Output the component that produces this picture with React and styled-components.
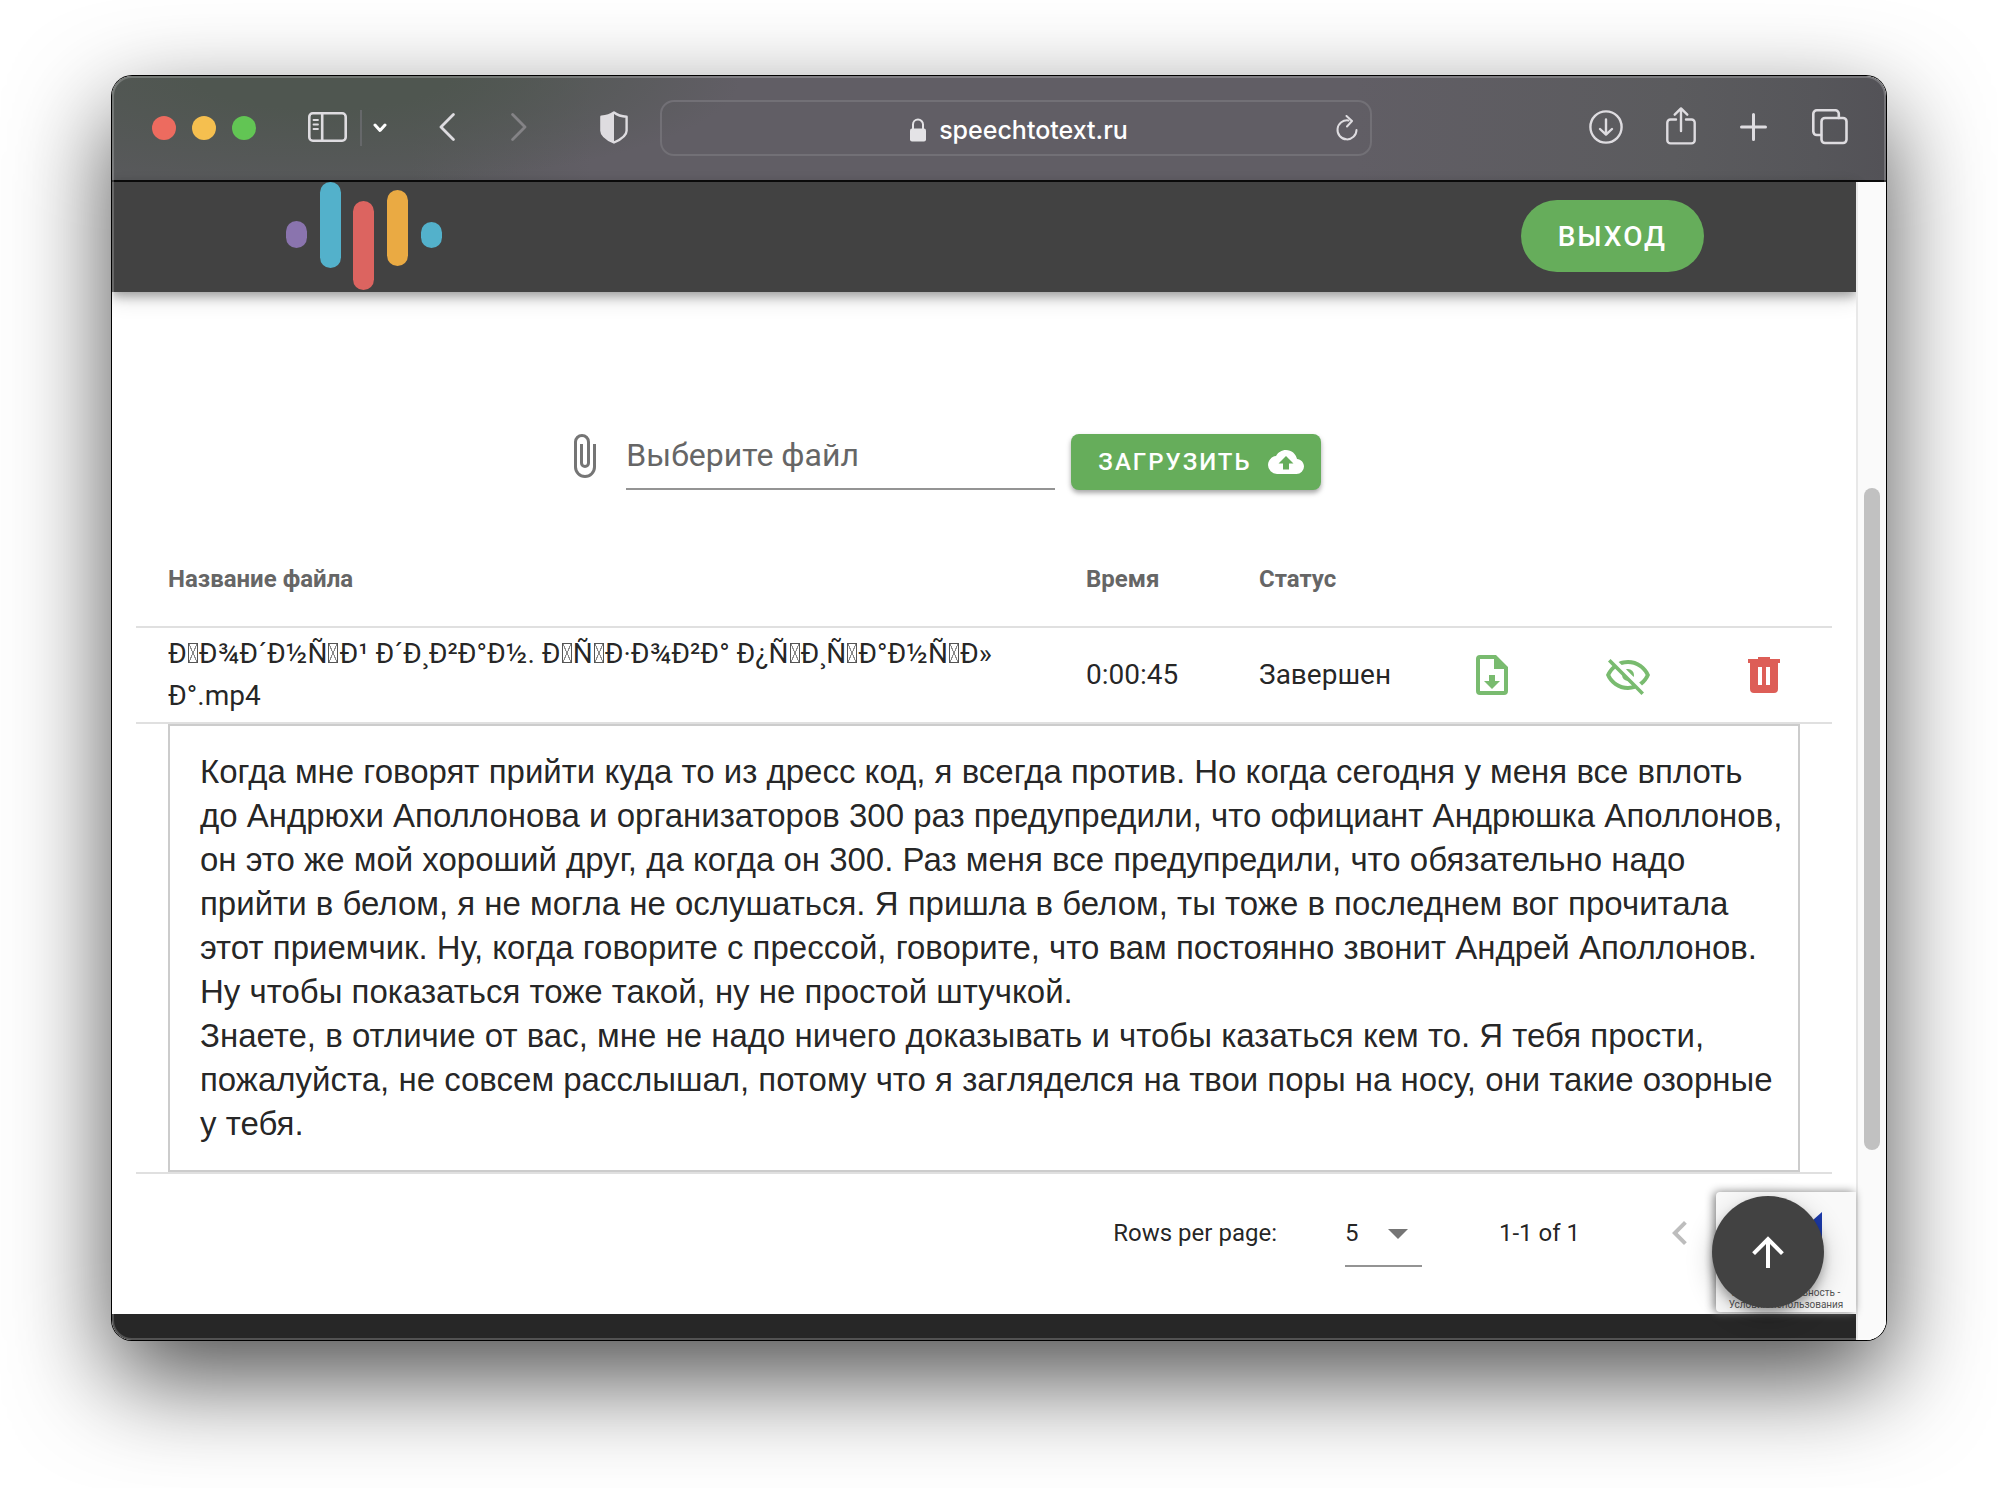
import React from "react";
import styled, { createGlobalStyle } from "styled-components";

const GlobalStyle = createGlobalStyle`
  * {
    box-sizing: border-box;
  }
  body {
    margin: 0;
    background: #fff;
    color: rgba(0, 0, 0, 0.87);
    font-family: Roboto, "Noto Sans", sans-serif;
  }
  button {
    border: 0;
    padding: 0;
    background: none;
    color: inherit;
    font-family: inherit;
    cursor: pointer;
  }
`;

const Desktop = styled.div`
  padding: 76px 112px 148px;
`;

const BrowserWindow = styled.div`
  position: relative;
  border-radius: 20px;
  overflow: hidden;
  background: #fff;
`;

const WindowShadow = styled.div`
  border-radius: 20px;
  box-shadow: 0 0 0 1px #000, 0 38px 100px rgba(0, 0, 0, 0.7);
`;

const WindowRim = styled.div`
  position: absolute;
  inset: 0;
  border: 2px solid rgba(255, 255, 255, 0.2);
  border-radius: 20px;
  pointer-events: none;
  z-index: 5;
`;

const Toolbar = styled.div`
  display: flex;
  align-items: center;
  height: 106px;
  padding: 0 38px 0 40px;
  border-bottom: 2px solid #0c0c0c;
  color: #dedce0;
  background: radial-gradient(ellipse 420px 110px at 210px 0, #4f5650 30%, rgba(79, 86, 80, 0) 100%),
    linear-gradient(90deg, #58595b 0, #58595b 300px, #615e65 480px, #615e65 70%, #5b5b5e 88%, #56565a 96%, #535257 100%);
`;

const Lights = styled.div`
  display: flex;
  gap: 16px;
  margin-right: 52px;
`;

const Light = styled.span`
  width: 24px;
  height: 24px;
  border-radius: 50%;
  background: ${(props) => props.$color};
`;

const ToolButton = styled.button`
  display: flex;
  flex: none;
  margin-left: ${(props) => props.$gap || 0}px;
  color: ${(props) => (props.$dim ? "#848386" : "inherit")};
`;

const ToolDivider = styled.span`
  width: 2px;
  height: 36px;
  margin-left: 13px;
  background: #66686a;
`;

const AddressBar = styled.div`
  display: flex;
  flex: 1;
  align-items: center;
  justify-content: center;
  height: 56px;
  margin: 0 217px 0 32px;
  padding: 0 12px;
  border: 2px solid #727076;
  border-radius: 14px;
`;

const Address = styled.span`
  display: flex;
  flex: 1;
  align-items: center;
  justify-content: center;
  gap: 13px;
  padding: 4px 0 0 28px;
  color: #fff;
  font: 500 25px/32px Inter, sans-serif;
`;

const Viewport = styled.div`
  display: flex;
`;

const Page = styled.div`
  flex: 1;
  min-width: 0;
`;

const ScrollTrack = styled.div`
  width: 30px;
  padding: 306px 4px 0 6px;
  border-left: 2px solid #e8e8e8;
  background: #fafafa;
`;

const ScrollThumb = styled.div`
  width: 16px;
  height: 662px;
  border-radius: 8px;
  background: #c1c1c1;
`;

const Header = styled.header`
  display: flex;
  align-items: center;
  justify-content: space-between;
  height: 110px;
  padding: 0 152px 2px 174px;
  background: #424242;
  box-shadow: 0 4px 10px rgba(0, 0, 0, 0.32), 0 8px 20px rgba(0, 0, 0, 0.12);
`;

const LogoLink = styled.a`
  display: flex;
`;

const ExitButton = styled.button`
  height: 72px;
  padding: 0 37px;
  border-radius: 36px;
  background: #66ad5b;
  color: #fff;
  font-size: 28px;
  font-weight: 500;
  letter-spacing: 2px;
`;

const UploadForm = styled.form`
  display: flex;
  justify-content: center;
  align-items: flex-start;
  padding: 140px 87px 40px 0;
`;

const ClipIcon = styled.svg`
  flex: none;
  margin-right: 18px;
  color: #757575;
`;

const FileInput = styled.input`
  width: 429px;
  height: 58px;
  padding: 0 0 10px;
  border: 0;
  border-bottom: 2px solid #949494;
  border-radius: 0;
  background: none;
  color: inherit;
  font: 32px/46px Roboto, sans-serif;

  &::placeholder {
    color: #666;
    opacity: 1;
  }
`;

const UploadButton = styled.button`
  display: flex;
  align-items: center;
  gap: 16px;
  height: 56px;
  margin: 2px 0 0 16px;
  padding: 0 17px 0 27px;
  border-radius: 8px;
  background: #66ad5b;
  box-shadow: 0 3px 5px rgba(0, 0, 0, 0.35);
  color: #fff;
  font-size: 24px;
  font-weight: 500;
  letter-spacing: 2px;
`;

const TableWrap = styled.div`
  padding: 0 24px;
`;

const FilesTable = styled.table`
  width: 100%;
  table-layout: fixed;
  border-collapse: separate;
  border-spacing: 0;
`;

const Col = styled.col`
  width: ${(props) => props.$width}px;
`;

const Th = styled.th`
  height: 98px;
  padding: 2px 32px 0;
  border-bottom: 2px solid #e0e0e0;
  color: #666;
  font-size: 24px;
  font-weight: 700;
  text-align: left;
`;

const Td = styled.td`
  height: 96px;
  padding: 0 ${(props) => (props.$icon ? 0 : 32)}px;
  border-bottom: 2px solid #e0e0e0;
  font-size: 28px;
  line-height: 42px;
  text-align: ${(props) => (props.$icon ? "center" : "left")};
`;

const FileName = styled.span`
  display: block;
  white-space: pre-line;
`;

// crossed box for a character the font cannot draw
const MissingGlyph = styled.span`
  display: inline-block;
  width: 10px;
  height: 20px;
  margin: 0 1px;
  border: 1px solid #555;
  background: linear-gradient(to top right, transparent 46%, #888 47%, #888 53%, transparent 54%),
    linear-gradient(to bottom right, transparent 46%, #888 47%, #888 53%, transparent 54%);
`;

const RowAction = styled.button`
  display: inline-flex;
  vertical-align: middle;
  color: ${(props) => props.$color};
`;

const TranscriptCell = styled.td`
  padding: 0 32px;
  border-bottom: 2px solid #e0e0e0;
`;

const Transcript = styled.div`
  padding: 24px 12px 24px 30px;
  border: 2px solid #ccc;
  font: 33px/44px "Liberation Sans", Arial, sans-serif;
  white-space: pre-line;
`;

const Pager = styled.div`
  display: flex;
  align-items: center;
  justify-content: flex-end;
  height: 140px;
  padding: 0 152px 22px 0;
  font-size: 24px;
`;

const RowsSelectBox = styled.span`
  position: relative;
  display: flex;
  margin: 8px 77px 0 68px;
`;

const RowsSelect = styled.select`
  appearance: none;
  width: 77px;
  height: 60px;
  padding: 0 0 6px;
  border: 0;
  border-bottom: 2px solid #949494;
  border-radius: 0;
  background: none;
  color: inherit;
  font: 24px Roboto, sans-serif;
`;

const SelectArrow = styled.svg`
  position: absolute;
  top: 2px;
  right: 0;
  color: #757575;
  pointer-events: none;
`;

const PrevButton = styled.button`
  display: flex;
  margin-left: 76px;
  color: #bdbdbd;
`;

const Footer = styled.footer`
  height: 26px;
  background: #272727;
`;

const Captcha = styled.aside`
  position: absolute;
  right: 30px;
  bottom: 28px;
  display: flex;
  flex-direction: column;
  align-items: center;
  justify-content: space-between;
  width: 140px;
  height: 120px;
  padding: 16px 12px 1px;
  border-radius: 4px 0 0 4px;
  background: #f9f9f9;
  box-shadow: -2px 0 10px gray;
  color: #555;
  font-size: 10px;
  line-height: 12px;
  text-align: center;
  white-space: nowrap;
`;

const FabButton = styled.button`
  position: absolute;
  right: 62px;
  bottom: 32px;
  display: flex;
  align-items: center;
  justify-content: center;
  width: 112px;
  height: 112px;
  border-radius: 50%;
  background: #424242;
  box-shadow: 0 6px 10px rgba(0, 0, 0, 0.25), 0 8px 28px rgba(0, 0, 0, 0.2);
  color: #fff;
`;

const PATHS = {
  clip: "M16.5,6V17.5A4,4 0 0,1 12.5,21.5A4,4 0 0,1 8.5,17.5V5A2.5,2.5 0 0,1 11,2.5A2.5,2.5 0 0,1 13.5,5V15.5A1,1 0 0,1 12.5,16.5A1,1 0 0,1 11.5,15.5V6H10V15.5A2.5,2.5 0 0,0 12.5,18A2.5,2.5 0 0,0 15,15.5V5A4,4 0 0,0 11,1A4,4 0 0,0 7,5V17.5A5.5,5.5 0 0,0 12.5,23A5.5,5.5 0 0,0 18,17.5V6H16.5Z",
  cloud: "M14,13V17H10V13H7L12,8L17,13M19.35,10.03C18.67,6.59 15.64,4 12,4C9.11,4 6.6,5.64 5.35,8.03C2.34,8.36 0,10.9 0,14A6,6 0 0,0 6,20H19A5,5 0 0,0 24,15C24,12.36 21.95,10.22 19.35,10.03Z",
  download: "M14,2L20,8V20A2,2 0 0,1 18,22H6A2,2 0 0,1 4,20V4A2,2 0 0,1 6,2H14M18,20V9H13V4H6V20H18M12,19L8,15H10.5V12H13.5V15H16L12,19Z",
  eyeOff: "M2,5.27L3.28,4L20,20.72L18.73,22L15.65,18.92C14.5,19.3 13.28,19.5 12,19.5C7,19.5 2.73,16.39 1,12C1.69,10.24 2.79,8.69 4.19,7.46L2,5.27M12,9A3,3 0 0,1 15,12C15,12.35 14.94,12.69 14.83,13L11,9.17C11.31,9.06 11.65,9 12,9M12,4.5C17,4.5 21.27,7.61 23,12C22.18,14.08 20.79,15.88 19,17.19L17.58,15.76C18.94,14.82 20.06,13.54 20.82,12C19.17,8.64 15.76,6.5 12,6.5C10.91,6.5 9.84,6.68 8.84,7L7.3,5.47C8.74,4.85 10.33,4.5 12,4.5M3.18,12C4.83,15.36 8.24,17.5 12,17.5C12.69,17.5 13.37,17.43 14,17.29L11.72,15C10.29,14.85 9.15,13.71 9,12.28L5.6,8.87C4.61,9.72 3.78,10.78 3.18,12Z",
  trash: "M9,3V4H4V6H5V19A2,2 0 0,0 7,21H17A2,2 0 0,0 19,19V6H20V4H15V3H9M9,8H11V17H9V8M13,8H15V17H13V8Z",
  menuDown: "M7,10L12,15L17,10H7Z",
  prev: "M15.41,16.58L10.83,12L15.41,7.41L14,6L8,12L14,18L15.41,16.58Z",
  up: "M13,20H11V8L5.5,13.5L4.08,12.08L12,4.16L19.92,12.08L18.5,13.5L13,8V20Z",
};

const Icon = ({ name, size = 48 }) => (
  <svg width={size} height={size} viewBox="0 0 24 24" fill="currentColor" fillRule="evenodd" aria-hidden="true">
    <path d={PATHS[name]} />
  </svg>
);

// thin stroked icons of the browser toolbar
const LineIcon = ({ w, h, stroke = 2.6, children }) => (
  <svg
    width={w}
    height={h}
    viewBox={`0 0 ${w} ${h}`}
    fill="none"
    stroke="currentColor"
    strokeWidth={stroke}
    strokeLinecap="round"
    strokeLinejoin="round"
    aria-hidden="true"
  >
    {children}
  </svg>
);

const Logo = () => (
  <svg width="157" height="108" viewBox="0 0 157 108" aria-hidden="true">
    <rect x="0" y="39" width="21" height="27" rx="10.5" fill="#8a74ae" />
    <rect x="34" y="0" width="21" height="86" rx="10.5" fill="#53b1cb" />
    <rect x="67" y="19" width="21" height="89" rx="10.5" fill="#dc6460" />
    <rect x="101" y="8" width="21" height="76" rx="10.5" fill="#eaaa43" />
    <rect x="135" y="40" width="21" height="26" rx="10.5" fill="#53b1cb" />
  </svg>
);

const BrowserToolbar = () => (
  <Toolbar>
    <Lights>
      <Light $color="#ed6b5f" />
      <Light $color="#f5bf4f" />
      <Light $color="#62c554" />
    </Lights>
    <ToolButton aria-label="Sidebar">
      <LineIcon w={39} h={32}>
        <rect x="1.3" y="1.3" width="36.4" height="27.4" rx="3.5" />
        <path d="M14.2 1.5v27" />
        <path d="M5.5 8h4.5M5.5 12.5h4.5M5.5 17h4.5" strokeWidth="1.8" />
      </LineIcon>
    </ToolButton>
    <ToolDivider />
    <ToolButton aria-label="Tab groups" $gap={11}>
      <LineIcon w={14} h={10} stroke={3}>
        <path d="M2 2l5 5.5L12 2" stroke="#fff" />
      </LineIcon>
    </ToolButton>
    <ToolButton aria-label="Back" $gap={52}>
      <LineIcon w={16} h={30} stroke={2.8}>
        <path d="M14.4 1.6L2 14l12.4 12.4" />
      </LineIcon>
    </ToolButton>
    <ToolButton aria-label="Forward" $gap={56} $dim>
      <LineIcon w={16} h={30} stroke={2.8}>
        <path d="M1.6 1.6L14 14 1.6 26.4" />
      </LineIcon>
    </ToolButton>
    <ToolButton aria-label="Privacy report" $gap={73}>
      <LineIcon w={28} h={34} stroke={2.4}>
        <path d="M14 1.5c3.5 2.8 7.5 4 12.6 4.3v14c0 5-5.6 8.7-12.6 11.7C7 28.5 1.4 24.8 1.4 19.8v-14C6.5 5.5 10.5 4.3 14 1.5z" />
        <path d="M14 1.5v30C7 28.5 1.4 24.8 1.4 19.8v-14C6.5 5.5 10.5 4.3 14 1.5z" fill="currentColor" stroke="none" />
      </LineIcon>
    </ToolButton>
    <AddressBar>
      <Address>
        <svg width="16" height="24" viewBox="0 0 16 24" fill="none" aria-hidden="true">
          <path d="M3 11V6.5a5 5 0 0 1 10 0V11" stroke="#e4e3e6" strokeWidth="2" />
          <rect x="0" y="10.5" width="16" height="13" rx="2" fill="#e4e3e6" />
        </svg>
        speechtotext.ru
      </Address>
      <ToolButton aria-label="Reload">
        <LineIcon w={22} h={26} stroke={2}>
          <path d="M12.5 5.5A9.5 9.5 0 1 0 20.5 15" />
          <path d="M10.5 1l5.5 5-5 5.5" />
        </LineIcon>
      </ToolButton>
    </AddressBar>
    <ToolButton aria-label="Downloads">
      <LineIcon w={34} h={36} stroke={2.4}>
        <circle cx="17" cy="17" r="15.6" />
        <path d="M17 9.5v15M11 19l6 5.7 6-5.7" />
      </LineIcon>
    </ToolButton>
    <ToolButton aria-label="Share" $gap={43}>
      <LineIcon w={30} h={46} stroke={2.4}>
        <path d="M10 14.5H4.5a3.2 3.2 0 0 0-3.2 3.2v17.5a3.2 3.2 0 0 0 3.2 3.2h21a3.2 3.2 0 0 0 3.2-3.2V17.7a3.2 3.2 0 0 0-3.2-3.2H20M15 26V4M8.7 9.7L15 3.4l6.3 6.3" />
      </LineIcon>
    </ToolButton>
    <ToolButton aria-label="New tab" $gap={44}>
      <LineIcon w={27} h={30} stroke={3}>
        <path d="M13.5 1.5v25M1.5 14h24" />
      </LineIcon>
    </ToolButton>
    <ToolButton aria-label="Tab overview" $gap={45}>
      <LineIcon w={36} h={38}>
        <rect x="9.5" y="9" width="25" height="25" rx="3.5" />
        <path d="M9 26H4.8a3.5 3.5 0 0 1-3.5-3.5V4.8a3.5 3.5 0 0 1 3.5-3.5h18.5a3.5 3.5 0 0 1 3.5 3.5V9" />
      </LineIcon>
    </ToolButton>
  </Toolbar>
);

// UTF-8 name decoded as latin-1, "|" stands where a control character was
const FILE_NAME = "Ð|Ð¾Ð´Ð½Ñ|Ð¹ Ð´Ð¸Ð²Ð°Ð½. Ð|Ñ|Ð·Ð¾Ð²Ð° Ð¿Ñ|Ð¸Ñ|Ð°Ð½Ñ|Ð»\nÐ°.mp4";

const TRANSCRIPT = `Когда мне говорят прийти куда то из дресс код, я всегда против. Но когда сегодня у меня все вплоть
до Андрюхи Аполлонова и организаторов 300 раз предупредили, что официант Андрюшка Аполлонов,
он это же мой хороший друг, да когда он 300. Раз меня все предупредили, что обязательно надо
прийти в белом, я не могла не ослушаться. Я пришла в белом, ты тоже в последнем вог прочитала
этот приемчик. Ну, когда говорите с прессой, говорите, что вам постоянно звонит Андрей Аполлонов.
Ну чтобы показаться тоже такой, ну не простой штучкой.
Знаете, в отличие от вас, мне не надо ничего доказывать и чтобы казаться кем то. Я тебя прости,
пожалуйста, не совсем расслышал, потому что я загляделся на твои поры на носу, они такие озорные
у тебя.`;

const App = () => {
  return (
    <Desktop>
      <GlobalStyle />
      <WindowShadow>
        <BrowserWindow>
          <BrowserToolbar />
          <Viewport>
            <Page>
              <Header>
                <LogoLink href="#" aria-label="speechtotext.ru">
                  <Logo />
                </LogoLink>
                <ExitButton>ВЫХОД</ExitButton>
              </Header>
              <UploadForm onSubmit={(e) => e.preventDefault()}>
                <ClipIcon width="48" height="48" viewBox="0 0 24 24" fill="currentColor" aria-hidden="true">
                  <path d={PATHS.clip} />
                </ClipIcon>
                <FileInput type="text" placeholder="Выберите файл" aria-label="Выберите файл" />
                <UploadButton type="submit">
                  ЗАГРУЗИТЬ
                  <Icon name="cloud" size={36} />
                </UploadButton>
              </UploadForm>
              <TableWrap>
                <FilesTable>
                  <colgroup>
                    <col />
                    <Col $width={173} />
                    <Col $width={197} />
                    <Col $width={136} />
                    <Col $width={136} />
                    <Col $width={136} />
                  </colgroup>
                  <thead>
                    <tr>
                      <Th>Название файла</Th>
                      <Th>Время</Th>
                      <Th>Статус</Th>
                      <Th />
                      <Th />
                      <Th />
                    </tr>
                  </thead>
                  <tbody>
                    <tr>
                      <Td>
                        <FileName>
                          {FILE_NAME.split("|").map((part, i) => (
                            <React.Fragment key={i}>
                              {i > 0 && <MissingGlyph />}
                              {part}
                            </React.Fragment>
                          ))}
                        </FileName>
                      </Td>
                      <Td>0:00:45</Td>
                      <Td>Завершен</Td>
                      <Td $icon>
                        <RowAction $color="#79bb6f" aria-label="Скачать">
                          <Icon name="download" />
                        </RowAction>
                      </Td>
                      <Td $icon>
                        <RowAction $color="#79bb6f" aria-label="Скрыть">
                          <Icon name="eyeOff" />
                        </RowAction>
                      </Td>
                      <Td $icon>
                        <RowAction $color="#dd5e57" aria-label="Удалить">
                          <Icon name="trash" />
                        </RowAction>
                      </Td>
                    </tr>
                    <tr>
                      <TranscriptCell colSpan={6}>
                        <Transcript>{TRANSCRIPT}</Transcript>
                      </TranscriptCell>
                    </tr>
                  </tbody>
                </FilesTable>
              </TableWrap>
              <Pager>
                <label htmlFor="rows">Rows per page:</label>
                <RowsSelectBox>
                  <RowsSelect id="rows" defaultValue="5">
                    <option>5</option>
                    <option>10</option>
                    <option>15</option>
                  </RowsSelect>
                  <SelectArrow width="48" height="48" viewBox="0 0 24 24" fill="currentColor" aria-hidden="true">
                    <path d={PATHS.menuDown} />
                  </SelectArrow>
                </RowsSelectBox>
                <span>1-1 of 1</span>
                <PrevButton aria-label="Previous page">
                  <Icon name="prev" />
                </PrevButton>
              </Pager>
              <Footer />
            </Page>
            <ScrollTrack>
              <ScrollThumb />
            </ScrollTrack>
          </Viewport>
          <Captcha>
            <svg width="72" height="64" viewBox="0 0 72 64" aria-hidden="true">
              <path d="M72 4v28H48l9-9A24 24 0 0 0 36 12V0a36 36 0 0 1 27 12z" fill="#1c3aa9" />
              <path d="M36 0v12a20 20 0 0 0-20 20H2A34 34 0 0 1 36 0z" fill="#4285f4" />
              <path d="M2 32h22l-8 8a24 24 0 0 0 38 4l8 9A34 34 0 0 1 2 50z" fill="#ababab" />
            </svg>
            <div>
              Конфиденциальность -
              <br />
              Условия использования
            </div>
          </Captcha>
          <FabButton aria-label="Наверх">
            <Icon name="up" />
          </FabButton>
          <WindowRim />
        </BrowserWindow>
      </WindowShadow>
    </Desktop>
  );
};

export default App;
